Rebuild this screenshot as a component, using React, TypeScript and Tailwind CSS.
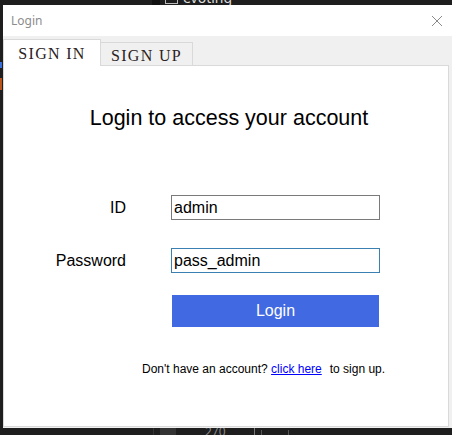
import React, { useState } from 'react';

const sans = { fontFamily: '"Liberation Sans", Arial, sans-serif' };
const serif = { fontFamily: '"Liberation Serif", "Times New Roman", serif' };
const ui = { fontFamily: '"Noto Sans", "Open Sans", sans-serif' };

export default function App() {
  const [id, setId] = useState('admin');
  const [password, setPassword] = useState('pass_admin');

  return (
    <div className="relative w-[452px] h-[435px] overflow-hidden bg-[#1e1e1e] pt-[5px] pl-[3px]">
      {/* editor bits peeking out behind the dialog */}
      <div className="absolute left-[152px] top-0 w-[8px] h-[5px] bg-[#111]" />
      <div className="absolute left-[165px] top-[-6px] w-[13px] h-[10px] border border-[#bbb]" />
      <div className="absolute left-[183px] top-[-13px] text-[14px] text-[#ddd]" style={ui}>evoting</div>
      <div className="absolute left-0 top-[62px] w-[2px] h-[6px] bg-[#3b6fd8]" />
      <div className="absolute left-0 top-[78px] w-[2px] h-[12px] bg-[#b8541e]" />
      <div className="absolute left-[153px] top-[428px] w-px h-[7px] bg-[#333]" />
      <div className="absolute left-[160px] top-[428px] w-[16px] h-[7px] bg-[#333]" />
      <div className="absolute left-[205px] top-[423px] text-[12px] text-[#888]" style={ui}>270</div>
      <div className="absolute left-[254px] top-[428px] w-px h-[7px] bg-[#777]" />
      <div className="absolute left-[261px] top-[430px] w-px h-[5px] bg-[#555]" />
      <div className="absolute left-[288px] top-[430px] w-px h-[5px] bg-[#555]" />

      <div className="relative w-[449px] h-[423px] flex flex-col">
        <div className="h-[31px] bg-white flex items-center justify-between pl-[8px] pr-[9px]">
          <span className="text-[12px] text-[#8c8c8c]" style={ui}>Login</span>
          <svg width="12" height="12" viewBox="0 0 12 12" className="text-[#8a8a8a]">
            <path d="M1 1 L11 11 M11 1 L1 11" stroke="currentColor" strokeWidth="1" />
          </svg>
        </div>

        <div className="flex-1 bg-[#f0f0f0] flex flex-col">
          <div className="flex items-end pt-[3px] h-[30px]">
            <div
              className="relative z-10 w-[98px] h-[27px] bg-white border border-b-0 border-[#d9d9d9] flex items-center justify-center pt-[1px] text-[16px] tracking-[1.3px] text-[#2a2222]"
              style={serif}
            >
              SIGN IN
            </div>
            <div
              className="w-[92px] h-[24px] bg-[#f0f0f0] border border-b-0 border-l-0 border-[#d9d9d9] flex items-center justify-center pt-[2px] text-[16px] tracking-[1.3px] text-[#2a2222]"
              style={serif}
            >
              SIGN UP
            </div>
          </div>

          <div className="mt-[-1px] w-[446px] h-[362px] bg-white border border-[#d9d9d9] flex flex-col" style={sans}>
            <h1 className="mt-[38px] pl-[6px] text-center text-[21.5px] leading-[28px] text-black">
              Login to access your account
            </h1>

            <div className="mt-[63px] flex items-center h-[25px]">
              <label className="w-[122px] text-right text-[16px] text-black">ID</label>
              <input
                value={id}
                onChange={(e) => setId(e.target.value)}
                className="ml-[45px] w-[209px] h-[25px] border border-[#7a7a7a] pl-[2px] text-[16px] text-black outline-none"
                style={sans}
              />
            </div>

            <div className="mt-[28px] flex items-center h-[25px]">
              <label className="w-[122px] text-right text-[16px] text-black">Password</label>
              <input
                value={password}
                onChange={(e) => setPassword(e.target.value)}
                className="ml-[45px] w-[209px] h-[25px] border border-[#3c7fb1] pl-[2px] text-[16px] text-black outline-none"
                style={sans}
              />
            </div>

            <button className="mt-[22px] ml-[168px] w-[207px] h-[32px] bg-[#4169e1] text-white text-[16px]" style={sans}>
              Login
            </button>

            <p className="mt-[34px] ml-[138px] text-[12px] leading-[16px] text-black">
              Don't have an account?{' '}
              <a href="#" className="text-[#0000ff] underline">click here</a>
              <span className="ml-[8px]">to sign up.</span>
            </p>
          </div>
        </div>
      </div>
    </div>
  );
}
